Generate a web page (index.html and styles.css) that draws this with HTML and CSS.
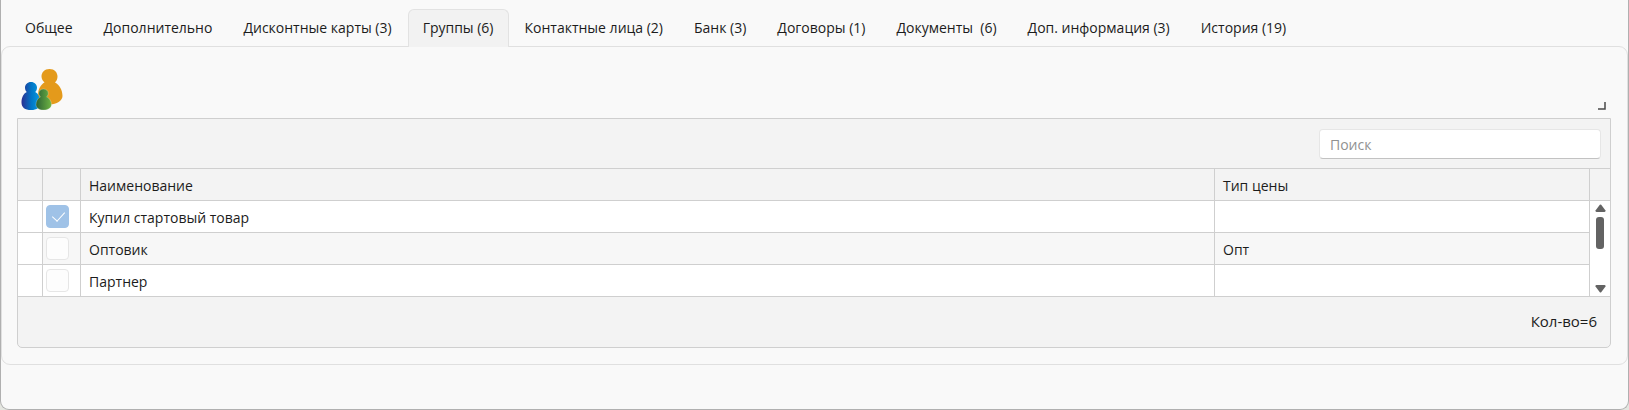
FILE: index.html
```html
<!DOCTYPE html>
<html lang="ru">
<head>
<meta charset="utf-8">
<title>Группы</title>
<link rel="stylesheet" href="styles.css">
</head>
<body>
<main class="window">
  <nav class="tabs" role="tablist">
    <button class="tab" role="tab">Общее</button>
    <button class="tab" role="tab">Дополнительно</button>
    <button class="tab" role="tab">Дисконтные карты (3)</button>
    <button class="tab tab-active" role="tab" aria-selected="true">Группы (6)</button>
    <button class="tab" role="tab">Контактные лица (2)</button>
    <button class="tab" role="tab">Банк (3)</button>
    <button class="tab" role="tab">Договоры (1)</button>
    <button class="tab" role="tab">Документы&nbsp; (6)</button>
    <button class="tab" role="tab">Доп. информация (3)</button>
    <button class="tab" role="tab">История (19)</button>
  </nav>
  <section class="panel" role="tabpanel">
    <div class="toolbar">
      <button class="icon-button" aria-label="Группы">
        <svg class="people" viewBox="0 0 42 42">
          <defs>
            <linearGradient id="blue"><stop offset="0" stop-color="#2b2f92"/><stop offset=".55" stop-color="#0078c8"/><stop offset="1" stop-color="#0a9ae0"/></linearGradient>
            <linearGradient id="green"><stop offset="0" stop-color="#2c6234"/><stop offset="1" stop-color="#6fb543"/></linearGradient>
          </defs>
          <path fill="#e49a1b" d="M28.500 0C33.500 0 36.500 3.500 36.500 7.500C36.500 10 35.500 12 34 13.500C38.500 15.500 41.500 21.500 41.500 27C41.500 31.500 35.500 35.500 29 35.500C22 35.500 17 31 17 26C17 20 20 15.500 23.500 13.500C22 12 20.500 10 20.500 7.500C20.500 3.500 23.500 0 28.500 0Z"/>
          <path fill="url(#blue)" d="M10 13C13.500 13 16 15.500 16 18.500C16 20.500 15.200 22 14.200 23C17.500 24.500 19 28.500 19 33.500C19 38.500 16 41 10 41C4 41 .500 38.500 .500 33.500C.500 28.500 2.500 24.500 5.800 23C4.800 22 4 20.500 4 18.500C4 15.500 6.500 13 10 13Z"/>
          <path fill="url(#green)" stroke="#f9f9f9" stroke-opacity=".4" stroke-width=".6" d="M22.500 20C25.300 20 27.300 22 27.300 24.200C27.300 25.800 26.600 27 25.600 27.800C28.500 29 30.500 32.500 30.500 35.500C30.500 39 27 41 22.500 41C18 41 15 39 15 35.500C15 32.500 16.700 29 19.500 27.800C18.500 27 17.800 25.800 17.800 24.200C17.800 22 19.800 20 22.500 20Z"/>
        </svg>
      </button>
      <svg class="corner" viewBox="0 0 8 8"><path d="M0 7H7V0" fill="none" stroke="#4a4a4a" stroke-width="1.500"/></svg>
    </div>
    <div class="grid">
      <div class="search-bar">
        <input class="search" type="search" placeholder="Поиск" aria-label="Поиск">
      </div>
      <table class="table">
        <colgroup><col class="col-mark"><col class="col-check"><col><col class="col-price"><col class="col-scroll"></colgroup>
        <thead>
          <tr><th></th><th></th><th>Наименование</th><th>Тип цены</th><th></th></tr>
        </thead>
        <tbody>
          <tr>
            <td class="mark"></td>
            <td class="check-cell"><input class="check" type="checkbox" checked aria-label="Купил стартовый товар"></td>
            <td>Купил стартовый товар</td><td></td>
            <td class="scroll-cell" rowspan="3">
              <div class="scrollbar">
                <svg class="arrow" viewBox="0 0 11 8"><path d="M4.800 .800Q5.500 0 6.200 .800L10.500 6.600Q10.700 8 9.500 8H1.500Q.300 8 .500 6.600Z"/></svg>
                <div class="thumb"></div>
                <svg class="arrow" viewBox="0 0 11 8"><path d="M4.800 7.200Q5.500 8 6.200 7.200L10.500 1.400Q10.700 0 9.500 0H1.500Q.300 0 .500 1.400Z"/></svg>
              </div>
            </td>
          </tr>
          <tr class="alt">
            <td class="mark"></td>
            <td class="check-cell"><input class="check" type="checkbox" aria-label="Оптовик"></td>
            <td>Оптовик</td><td>Опт</td>
          </tr>
          <tr>
            <td class="mark"></td>
            <td class="check-cell"><input class="check" type="checkbox" aria-label="Партнер"></td>
            <td>Партнер</td><td></td>
          </tr>
        </tbody>
      </table>
      <div class="summary">Кол-во=6</div>
    </div>
  </section>
</main>
</body>
</html>
```
FILE: styles.css
```css
* { box-sizing: border-box; }

body {
  margin: 0;
  background: #e4e6e0;
  color: #1c1c1c;
  font: 14px/20px "Open Sans", "Noto Sans", sans-serif;
}

.window {
  min-height: 100vh;
  padding-top: 9px;
  background: #f9f9f9;
  border: 1px solid #b0b0b0;
  border-top: 0;
  border-radius: 0 0 9px 9px;
}

.tabs {
  display: flex;
  gap: 1px;
  padding-left: 9px;
}

.tab {
  height: 37px;
  margin: 0;
  padding: 0 14px 1px;
  border: 1px solid transparent;
  border-bottom: 0;
  border-radius: 6px 6px 0 0;
  background: none;
  color: inherit;
  font: inherit;
  white-space: nowrap;
}

.tab-active {
  height: 38px;
  margin-bottom: -1px;
  padding-bottom: 2px;
  background: #f2f2f2;
  border-color: #e2e2e2;
  z-index: 1;
}

.panel {
  padding: 22px 16px 16px 15px;
  border: 1px solid #e0e0e0;
  border-radius: 9px;
}

.toolbar {
  display: flex;
  justify-content: space-between;
  align-items: flex-end;
  padding: 0 5px 7px 4px;
}

.icon-button {
  padding: 0;
  border: 0;
  background: none;
}

.people {
  display: block;
  width: 42px;
  height: 42px;
}

.corner {
  width: 8px;
  height: 8px;
  margin-bottom: 1px;
}

.grid {
  border: 1px solid #cfcfcf;
  border-radius: 0 0 5px 5px;
  background: #f3f3f3;
}

.search-bar {
  display: flex;
  justify-content: flex-end;
  padding: 10px 9px 9px;
}

.search {
  width: 282px;
  height: 30px;
  padding: 0 10px;
  border: 1px solid #e6e6e6;
  border-bottom-color: #c2c2c2;
  border-radius: 4px;
  background: #fff;
  color: inherit;
  font: inherit;
  appearance: none;
}

.search::placeholder { color: #919191; }

.table {
  width: 100%;
  border-collapse: separate;
  border-spacing: 0;
  border-top: 1px solid #cfcfcf;
  table-layout: fixed;
}

.col-mark { width: 25px; }
.col-check { width: 38px; }
.col-price { width: 375px; }
.col-scroll { width: 20px; }

.table th,
.table td {
  height: 32px;
  padding: 2px 8px 0;
  border-right: 1px solid #cfcfcf;
  border-bottom: 1px solid #cfcfcf;
  font-weight: 400;
  text-align: left;
}

.table th:last-child,
.table .scroll-cell { border-right: 0; }

.table td { background: #fff; }
.table .alt td { background: #f7f7f7; }
.table .alt .mark { background: #fff; }
.table .check-cell { padding: 0 3px; }

.check {
  display: block;
  width: 23px;
  height: 23px;
  margin: 0;
  border: 1px solid #e6e6e6;
  border-radius: 4px;
  background: #fdfdfd;
  appearance: none;
}

.check:checked {
  border-color: #9fc2e7;
  background: #9fc2e7;
}

.check:checked::before {
  content: "";
  display: block;
  width: 6px;
  height: 11px;
  margin: 3px 0 0 8px;
  border: solid #fff;
  border-width: 0 1px 1px 0;
  transform: rotate(42deg);
}

.table .scroll-cell {
  height: 96px;
  padding: 3px 0;
}

.scrollbar {
  display: flex;
  flex-direction: column;
  align-items: center;
  height: 89px;
}

.arrow {
  width: 11px;
  height: 8px;
  fill: #636363;
}

.thumb {
  width: 8px;
  height: 32px;
  margin: 5px 0 auto;
  border-radius: 3px;
  background: #636363;
}

.summary {
  padding: 14px 13px 16px;
  font-size: 15px;
  text-align: right;
}
```
